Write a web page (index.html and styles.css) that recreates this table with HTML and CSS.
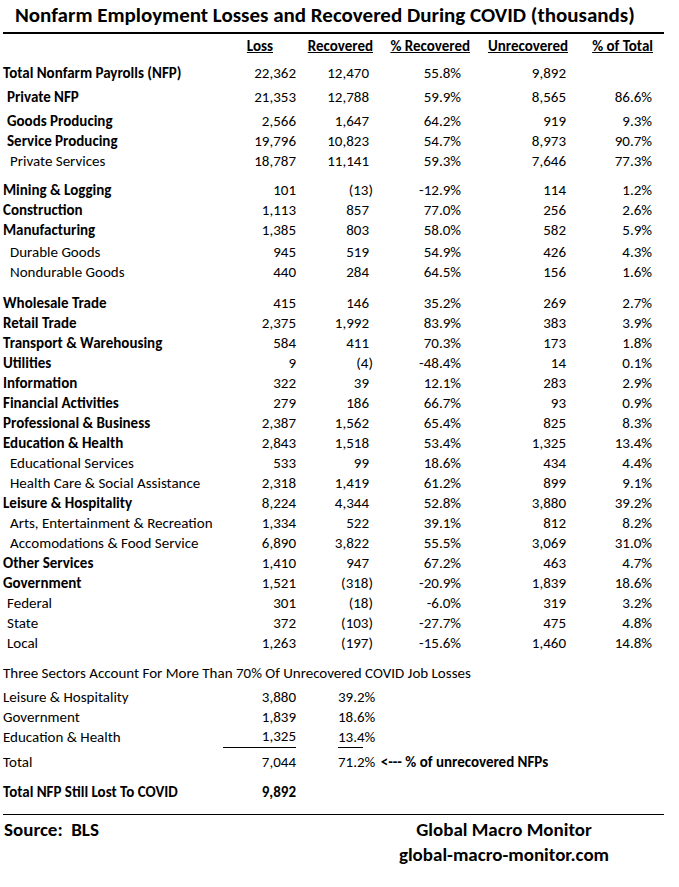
FILE: index.html
```html
<!DOCTYPE html>
<html>
<head>
<meta charset="utf-8">
<link rel="stylesheet" href="styles.css">
</head>
<body>
<div class="page">
  <h1 class="title">Nonfarm Employment Losses and Recovered During COVID (thousands)</h1>
  <div class="rule"></div>

  <div class="row head">
    <span></span>
    <span class="h h1">Loss</span>
    <span class="h h2">Recovered</span>
    <span class="h h3">% Recovered</span>
    <span class="h h4">Unrecovered</span>
    <span class="h h5">% of Total</span>
  </div>

  <div class="row b mt7"><span class="lab">Total Nonfarm Payrolls (NFP)</span><span>22,362</span><span class="p">12,470</span><span>55.8%</span><span>9,892</span><span></span></div>
  <div class="row b mt4"><span class="lab i1">Private NFP</span><span>21,353</span><span class="p">12,788</span><span>59.9%</span><span>8,565</span><span>86.6%</span></div>
  <div class="row b mt4"><span class="lab i1">Goods Producing</span><span>2,566</span><span class="p">1,647</span><span>64.2%</span><span>919</span><span>9.3%</span></div>
  <div class="row b"><span class="lab i1">Service Producing</span><span>19,796</span><span class="p">10,823</span><span>54.7%</span><span>8,973</span><span>90.7%</span></div>
  <div class="row"><span class="lab i2">Private Services</span><span>18,787</span><span class="p">11,141</span><span>59.3%</span><span>7,646</span><span>77.3%</span></div>

  <div class="row b mt9"><span class="lab">Mining &amp; Logging</span><span>101</span><span>(13)</span><span>-12.9%</span><span>114</span><span>1.2%</span></div>
  <div class="row b"><span class="lab">Construction</span><span>1,113</span><span class="p">857</span><span>77.0%</span><span>256</span><span>2.6%</span></div>
  <div class="row b"><span class="lab">Manufacturing</span><span>1,385</span><span class="p">803</span><span>58.0%</span><span>582</span><span>5.9%</span></div>
  <div class="row mt2"><span class="lab i2">Durable Goods</span><span>945</span><span class="p">519</span><span>54.9%</span><span>426</span><span>4.3%</span></div>
  <div class="row"><span class="lab i2">Nondurable Goods</span><span>440</span><span class="p">284</span><span>64.5%</span><span>156</span><span>1.6%</span></div>

  <div class="row b mt11"><span class="lab">Wholesale Trade</span><span>415</span><span class="p">146</span><span>35.2%</span><span>269</span><span>2.7%</span></div>
  <div class="row b"><span class="lab">Retail Trade</span><span>2,375</span><span class="p">1,992</span><span>83.9%</span><span>383</span><span>3.9%</span></div>
  <div class="row b"><span class="lab">Transport &amp; Warehousing</span><span>584</span><span class="p">411</span><span>70.3%</span><span>173</span><span>1.8%</span></div>
  <div class="row b"><span class="lab">Utilities</span><span>9</span><span>(4)</span><span>-48.4%</span><span>14</span><span>0.1%</span></div>
  <div class="row b"><span class="lab">Information</span><span>322</span><span class="p">39</span><span>12.1%</span><span>283</span><span>2.9%</span></div>
  <div class="row b"><span class="lab">Financial Activities</span><span>279</span><span class="p">186</span><span>66.7%</span><span>93</span><span>0.9%</span></div>
  <div class="row b"><span class="lab">Professional &amp; Business</span><span>2,387</span><span class="p">1,562</span><span>65.4%</span><span>825</span><span>8.3%</span></div>
  <div class="row b"><span class="lab">Education &amp; Health</span><span>2,843</span><span class="p">1,518</span><span>53.4%</span><span>1,325</span><span>13.4%</span></div>
  <div class="row"><span class="lab i2">Educational Services</span><span>533</span><span class="p">99</span><span>18.6%</span><span>434</span><span>4.4%</span></div>
  <div class="row"><span class="lab i2">Health Care &amp; Social Assistance</span><span>2,318</span><span class="p">1,419</span><span>61.2%</span><span>899</span><span>9.1%</span></div>
  <div class="row b"><span class="lab">Leisure &amp; Hospitality</span><span>8,224</span><span class="p">4,344</span><span>52.8%</span><span>3,880</span><span>39.2%</span></div>
  <div class="row"><span class="lab i2">Arts, Entertainment &amp; Recreation</span><span>1,334</span><span class="p">522</span><span>39.1%</span><span>812</span><span>8.2%</span></div>
  <div class="row"><span class="lab i2">Accomodations &amp; Food Service</span><span>6,890</span><span class="p">3,822</span><span>55.5%</span><span>3,069</span><span>31.0%</span></div>
  <div class="row b"><span class="lab">Other Services</span><span>1,410</span><span class="p">947</span><span>67.2%</span><span>463</span><span>4.7%</span></div>
  <div class="row b"><span class="lab">Government</span><span>1,521</span><span>(318)</span><span>-20.9%</span><span>1,839</span><span>18.6%</span></div>
  <div class="row"><span class="lab i1">Federal</span><span>301</span><span>(18)</span><span>-6.0%</span><span>319</span><span>3.2%</span></div>
  <div class="row"><span class="lab i1">State</span><span>372</span><span>(103)</span><span>-27.7%</span><span>475</span><span>4.8%</span></div>
  <div class="row"><span class="lab i1">Local</span><span>1,263</span><span>(197)</span><span>-15.6%</span><span>1,460</span><span>14.8%</span></div>

  <div class="note mt10">Three Sectors Account For More Than 70% Of Unrecovered COVID Job Losses</div>
  <div class="srow mt4"><span>Leisure &amp; Hospitality</span><span class="v">3,880</span><span></span><span class="pc">39.2%</span></div>
  <div class="srow"><span>Government</span><span class="v">1,839</span><span></span><span class="pc">18.6%</span></div>
  <div class="srow"><span>Education &amp; Health</span><span class="v ul">1,325</span><span></span><span class="pc"><span class="ulp">13.4%</span></span></div>
  <div class="srow mt5"><span>Total</span><span class="v">7,044</span><span></span><span class="pc">71.2% <b class="arrow">&lt;--- % of unrecovered NFPs</b></span></div>
  <div class="srow b mt10"><span>Total NFP Still Lost To COVID</span><span class="v">9,892</span><span></span><span></span></div>

  <div class="rule rule2"></div>
  <div class="footer">
    <div class="src">Source:&nbsp; BLS</div>
    <div class="brand">
      <div class="gmm">Global Macro Monitor</div>
      <div class="url">global-macro-monitor.com</div>
    </div>
  </div>
</div>
</body>
</html>
```

FILE: styles.css
```css
html, body {
  margin: 0;
  padding: 0;
  background: #fff;
}
body {
  font-family: Carlito, Lato, "Liberation Sans", sans-serif;
  color: #000;
  font-size: 15px;
}
.page {
  margin-left: 3px;
  width: 661px;
}
.title {
  margin: 0;
  height: 32px;
  line-height: 31px;
  font-size: 21px;
  font-weight: bold;
  padding-left: 12px;
  white-space: nowrap;
}
.rule {
  height: 1.5px;
  background: #000;
}
.row {
  display: grid;
  grid-template-columns: 230px 63px 77px 88px 105px 86px;
  height: 20px;
  line-height: 20px;
  white-space: nowrap;
}
.row > span {
  text-align: right;
}
.row > span.lab {
  text-align: left;
}
.row.b > span.lab {
  font-weight: bold;
}
.row > span.p {
  padding-right: 4px;
}
.i1 { padding-left: 4px; }
.i2 { padding-left: 7px; }
.head {
  margin-top: 2px;
}
.h {
  font-weight: bold;
  text-decoration: underline;
}
.h1 { padding-right: 23px; }
.h3 { margin-right: -9px; }
.h4 { margin-right: -2px; }
.h5 { margin-right: -1px; }

.mt2 { margin-top: 2px; }
.mt4 { margin-top: 4px; }
.mt5 { margin-top: 5px; }
.mt7 { margin-top: 7px; }
.mt9 { margin-top: 9px; }
.mt10 { margin-top: 10px; }
.mt11 { margin-top: 11px; }

.note {
  height: 20px;
  line-height: 20px;
  white-space: nowrap;
}
.srow {
  display: grid;
  grid-template-columns: 220px 73px 42px 1fr;
  height: 20px;
  line-height: 20px;
  white-space: nowrap;
}
.srow.b {
  font-weight: bold;
}
.srow .v {
  text-align: right;
}
.srow .v.ul {
  border-bottom: 1px solid #000;
  line-height: 19px;
}
.ulp {
  display: inline-block;
  width: 25px;
  line-height: 19px;
  border-bottom: 1px solid #000;
}
.arrow {
  font-weight: bold;
  margin-left: 2px;
}
.rule2 {
  margin-top: 12px;
}
.footer {
  display: grid;
  grid-template-columns: 337px 328px;
  font-weight: bold;
  font-size: 19px;
  margin-top: 1px;
}
.src {
  line-height: 28px;
  padding-left: 1px;
}
.brand {
  text-align: center;
}
.gmm {
  line-height: 28px;
}
.url {
  line-height: 22px;
}
```
